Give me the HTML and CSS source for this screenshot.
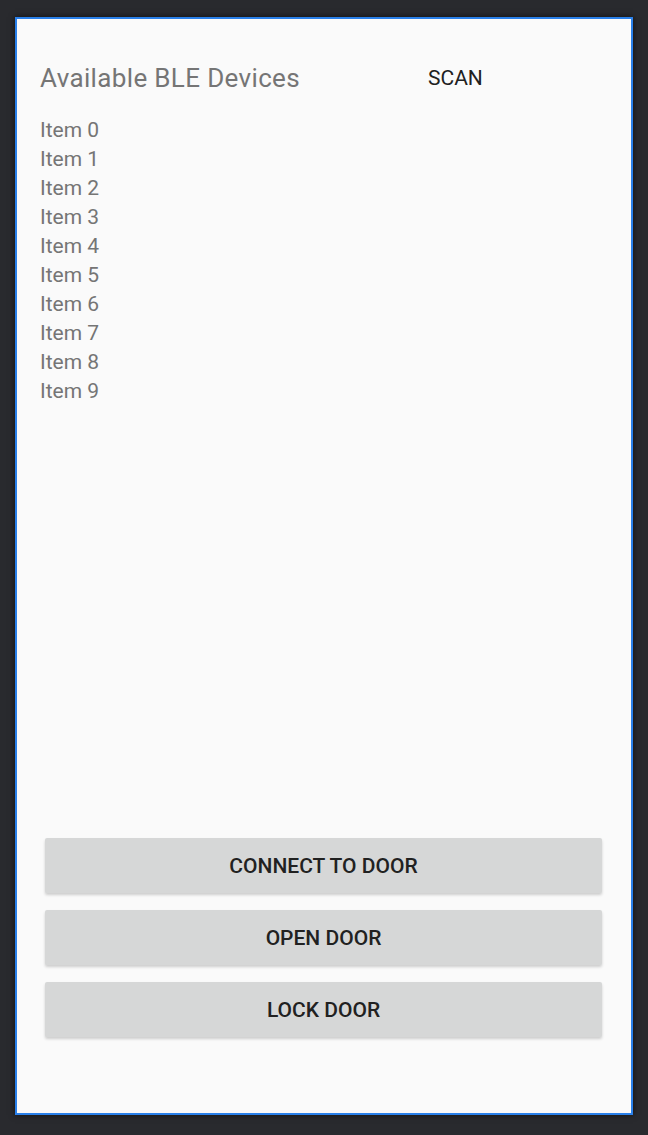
FILE: index.html
```html
<!DOCTYPE html>
<html>
<head>
<meta charset="utf-8">
<link rel="stylesheet" href="styles.css">
</head>
<body>
<div class="device">
  <div class="screen">
    <div class="header">
      <div class="title">Available BLE Devices</div>
      <div class="scan">SCAN</div>
    </div>
    <ul class="list">
      <li>Item 0</li>
      <li>Item 1</li>
      <li>Item 2</li>
      <li>Item 3</li>
      <li>Item 4</li>
      <li>Item 5</li>
      <li>Item 6</li>
      <li>Item 7</li>
      <li>Item 8</li>
      <li>Item 9</li>
    </ul>
    <div class="actions">
      <div class="btn">CONNECT TO DOOR</div>
      <div class="btn">OPEN DOOR</div>
      <div class="btn">LOCK DOOR</div>
    </div>
  </div>
</div>
</body>
</html>
```
FILE: styles.css
```css
html, body {
  margin: 0;
  padding: 0;
  background: #292a2e;
  height: 100%;
}
body {
  padding: 17px 15px 20px 15px;
  box-sizing: border-box;
  font-family: Roboto, "Noto Sans", sans-serif;
}
.device {
  width: 618px;
  height: 1098px;
  box-sizing: border-box;
  border: 2px solid #2a80ea;
  background: #fafafa;
  box-shadow: 0 0 6px rgba(0,0,0,0.6);
}
.screen {
  height: 100%;
  display: flex;
  flex-direction: column;
  padding: 43px 0 76px 23px;
  box-sizing: border-box;
}
.header {
  display: flex;
  align-items: center;
  height: 32px;
}
.title {
  font-size: 26px;
  letter-spacing: 0.35px;
  line-height: 32px;
  color: #757575;
  width: 388px;
}
.scan {
  font-size: 21px;
  font-weight: 400;
  color: #212121;
  width: 54px;
  text-align: center;
  line-height: 32px;
}
.list {
  list-style: none;
  margin: 22px 0 0 0;
  padding: 0;
  flex: 1;
}
.list li {
  font-size: 21px;
  line-height: 29px;
  color: #757575;
}
.actions {
  display: flex;
  flex-direction: column;
  gap: 17px;
  padding-left: 5px;
}
.btn {
  width: 557px;
  height: 55px;
  background: #d6d7d7;
  border-radius: 2px;
  box-shadow: 0 2px 3px rgba(0,0,0,0.18);
  display: flex;
  align-items: center;
  justify-content: center;
  font-size: 21px;
  font-weight: 500;
  color: #212121;
}
```
